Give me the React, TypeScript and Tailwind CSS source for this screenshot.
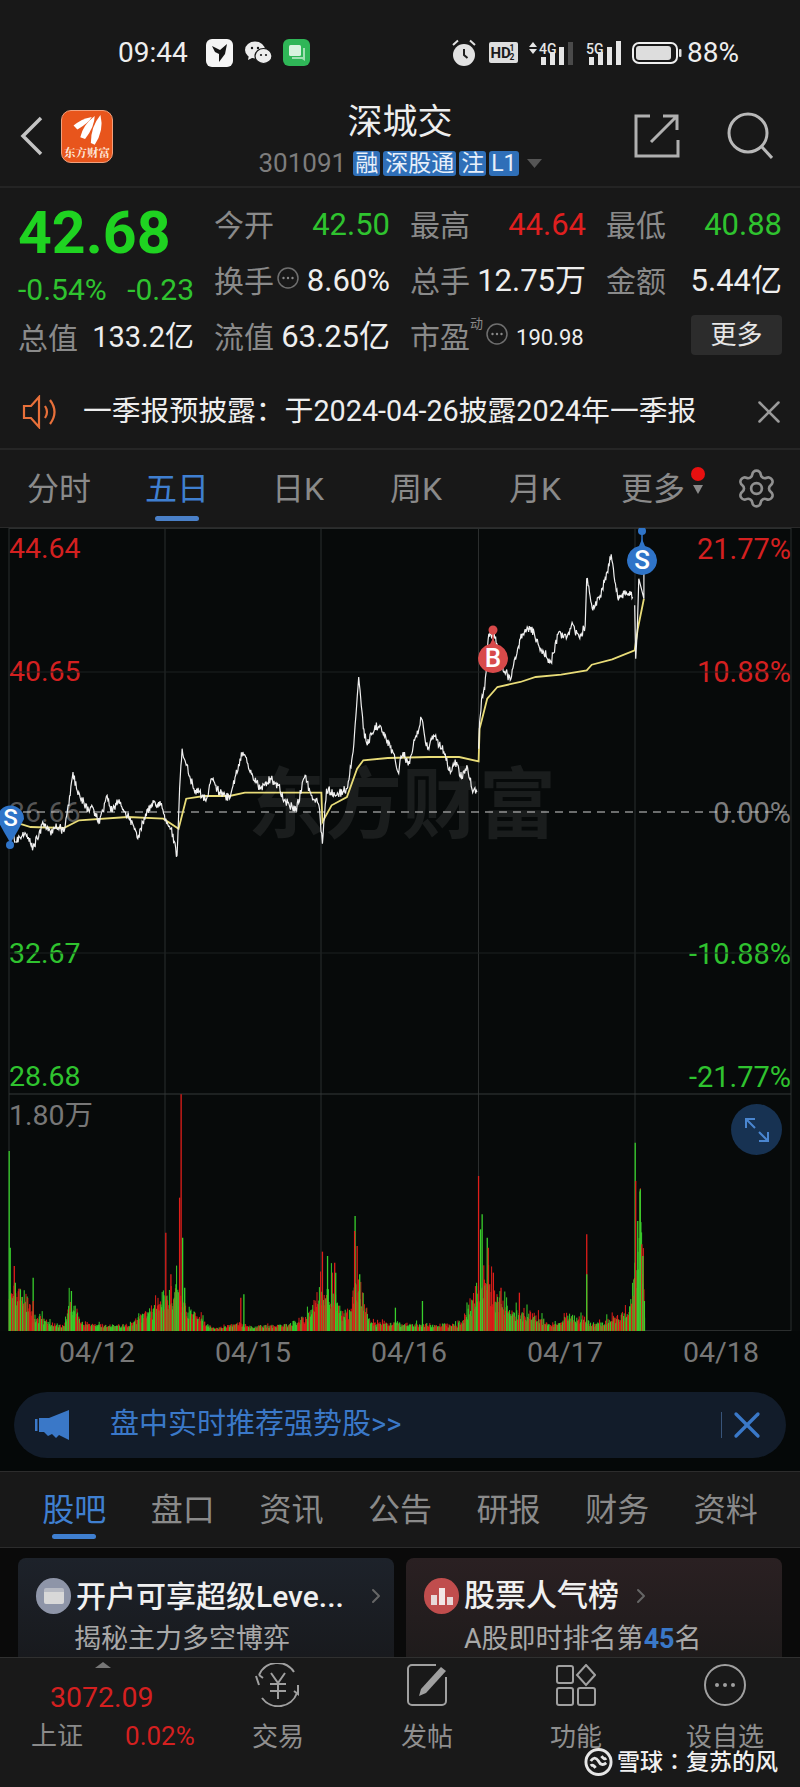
import React from 'react';
import { ChevronRight, Settings, X } from 'lucide-react';

const rand = (n: number) => {
  const s = Math.sin(n * 127.1 + 311.7) * 43758.5453;
  return s - Math.floor(s);
};

// anchors read off the chart: x in px, y in px, after scaling from the zoomed crop
const toReal = (p: number[][]) => p.map(([x, y]) => [x / 1.96, 521 + y / 3]);

const priceAnchors = toReal([
  [18, 900], [30, 960], [45, 930], [65, 975], [85, 905], [100, 940], [110, 905], [125, 930], [135, 850], [143, 750], [150, 800], [160, 830],
  [175, 870], [180, 850], [195, 905], [210, 820], [220, 870], [232, 840], [250, 880], [270, 950], [280, 900], [300, 835], [315, 850], [325, 890],
  [335, 920], [347, 1000], [352, 800], [357, 680], [365, 730], [380, 800], [405, 830], [415, 770], [430, 810], [450, 830], [462, 760], [476, 690],
  [490, 750], [510, 800], [530, 770], [545, 790], [560, 840], [580, 865], [598, 760], [610, 820], [625, 850],
  [632, 965], [640, 800], [660, 820], [680, 800], [692, 690], [703, 465], [712, 620], [720, 670], [735, 610], [750, 630], [770, 690], [780, 750],
  [790, 690], [800, 730], [810, 670], [826, 590], [838, 680], [850, 640], [870, 690], [880, 745], [895, 720], [905, 770], [915, 730], [925, 800], [935, 810],
]);

const priceAnchors2 = toReal([
  [938, 680], [940, 600], [945, 520], [950, 500], [958, 335], [970, 350], [985, 430], [1000, 475], [1020, 350], [1040, 315], [1060, 380], [1080, 420],
  [1095, 330], [1110, 350], [1120, 310], [1135, 345], [1147, 310], [1150, 170], [1162, 265], [1175, 230], [1190, 150], [1198, 97], [1212, 235], [1225, 205], [1240, 225],
]);

const priceAnchors3 = toReal([
  [1244, 250], [1246, 410], [1249, 330], [1252, 170], [1262, 230], [1262, 130],
]);

const avgAnchors = toReal([
  [18, 895], [60, 915], [125, 918], [155, 895], [250, 885], [320, 890], [350, 920], [365, 830], [400, 822], [450, 822], [480, 812], [630, 812],
  [632, 900], [650, 850], [680, 825], [700, 740], [712, 715], [760, 708], [840, 705], [900, 705], [938, 718], [940, 620], [955, 530], [975, 495],
  [1020, 480], [1050, 465], [1100, 458], [1150, 445], [1160, 428], [1200, 412], [1244, 385], [1250, 320], [1262, 230],
]);

const jagged = (anchors: number[][], amp: number) => {
  let d = `M${anchors[0][0].toFixed(1)} ${anchors[0][1].toFixed(1)}`;
  for (let i = 1; i < anchors.length; i++) {
    const [x0, y0] = anchors[i - 1];
    const [x1, y1] = anchors[i];
    const steps = Math.max(1, Math.round((x1 - x0) / 0.7));
    for (let s = 1; s <= steps; s++) {
      const t = s / steps;
      const noise = s === steps ? 0 : (rand(i * 100 + s) - 0.5) * amp;
      d += `L${(x0 + (x1 - x0) * t).toFixed(1)} ${(y0 + (y1 - y0) * t + noise).toFixed(1)}`;
    }
  }
  return d;
};

const line = (anchors: number[][]) => anchors.map(([x, y], i) => `${i ? 'L' : 'M'}${x.toFixed(1)} ${y.toFixed(1)}`).join('');

// volume envelope, [x in crop px, height in crop px]
const envelope = [
  [18, 130], [50, 110], [65, 50], [100, 25], [125, 15], [135, 90], [145, 90], [160, 20], [250, 20], [270, 40], [300, 70], [320, 120], [345, 130], [365, 80],
  [400, 30], [420, 8], [470, 25], [490, 15], [560, 20], [600, 45], [625, 120], [650, 130], [670, 60], [685, 60], [700, 170], [715, 80], [730, 25], [900, 20],
  [925, 90], [945, 190], [970, 110], [1000, 60], [1050, 50], [1080, 15], [1120, 50], [1170, 20], [1230, 60], [1240, 110], [1255, 400], [1262, 220], [1264, 0],
];

const envAt = (x: number) => {
  for (let i = 1; i < envelope.length; i++) {
    if (x <= envelope[i][0]) {
      const [x0, h0] = envelope[i - 1];
      const [x1, h1] = envelope[i];
      return h0 + ((h1 - h0) * (x - x0)) / (x1 - x0);
    }
  }
  return 0;
};

const RED = '#e01e1a';
const GREEN = '#38d02c';

const volumeBars: { x: number; h: number; c: string }[] = [];
for (let i = 0; i < 1060; i++) {
  const x = 9.2 + i * 0.6;
  const z = x * 1.96;
  const r = rand(i + 5000);
  const spike = rand(i + 7000) > 0.9 ? 1.6 : 1.1;
  volumeBars.push({ x, h: (envAt(z) * (0.45 + 0.55 * r) * spike) / 3, c: rand(i + 9000) > 0.5 ? RED : GREEN });
}

const spikes: [number, number, string][] = [
  [18, 210, GREEN], [20, 500, GREEN], [28, 555, RED], [30, 605, GREEN], [40, 625, GREEN], [65, 590, GREEN], [65, 660, RED], [140, 630, GREEN], [325, 455, RED], [335, 580, RED],
  [345, 610, GREEN], [352, 350, RED], [355, 40, RED], [358, 470, GREEN], [362, 620, GREEN], [472, 650, RED], [478, 640, GREEN], [632, 512, RED], [642, 525, GREEN], [656, 545, RED],
  [658, 575, GREEN], [696, 405, GREEN], [695, 450, RED], [700, 495, RED], [705, 580, GREEN], [775, 680, GREEN], [828, 660, GREEN], [938, 285, RED], [945, 400, GREEN], [942, 445, GREEN],
  [955, 470, GREEN], [957, 500, RED], [967, 575, RED], [982, 620, RED], [1018, 635, RED], [1150, 460, RED], [1150, 580, GREEN], [1245, 185, GREEN], [1246, 300, RED], [1255, 325, GREEN],
  [1250, 420, GREEN], [1258, 490, RED], [1260, 525, GREEN], [1263, 660, GREEN],
];

const gridX = [165, 321, 478.5, 635];
const gridY = [671, 952];

// the svg's own coordinates are page pixels, one lower than the crop readings
const ChartDrawing = () => (
  <svg viewBox="0 527 800 803" className="relative block w-[800px] h-[803px]" fill="none">
    <rect x="9" y="527.5" width="782" height="802" stroke="#2b2e2e" />
    {gridX.map((x) => <line key={x} x1={x} x2={x} y1={527} y2={1330} stroke="#2b2e2e" />)}
    {gridY.map((y) => <line key={y} x1={9} x2={791} y1={y} y2={y} stroke="#1d2020" />)}
    <line x1={9} x2={791} y1={1093} y2={1093} stroke="#353838" />
    <line x1={9} x2={791} y1={811} y2={811} stroke="#d0d0d0" strokeDasharray="8 6" />
    {volumeBars.map((b, i) => <line key={i} x1={b.x} x2={b.x} y1={1330} y2={1330 - b.h} stroke={b.c} strokeWidth={1} />)}
    {spikes.map(([x, y, c], i) => <line key={i} x1={x / 1.96} x2={x / 1.96} y1={1330} y2={1080 + y / 3} stroke={c} strokeWidth={1.3} />)}
    <path d={line(avgAnchors)} stroke="#e8dc78" strokeWidth={1.8} />
    <path d={jagged(priceAnchors, 9)} stroke="#f0f0f0" strokeWidth={1.2} />
    <path d={jagged(priceAnchors2, 9)} stroke="#f0f0f0" strokeWidth={1.2} />
    <path d={line(priceAnchors3)} stroke="#f0f0f0" strokeWidth={1.2} />

    <path d="M-3 818 A13.5 13.5 0 1 1 24 818 Q18 830 10.5 842 Q3 830 -3 818Z" fill="#2f74c8" />
    <circle cx="10" cy="844" r="4" fill="#2f74c8" />
    <text x="10.5" y="825" textAnchor="middle" fontSize="24" fontFamily="Roboto" fontWeight="500" fill="#fff">S</text>

    <line x1="642" x2="642" y1="530" y2="550" stroke="#2f74c8" strokeWidth="1.5" />
    <circle cx="642" cy="530" r="4" fill="#2f74c8" />
    <path d="M627 559 A15 15 0 0 0 657 559 A15 15 0 0 0 645 545 L642 538 L639 545 A15 15 0 0 0 627 559Z" fill="#2f74c8" />
    <text x="642" y="568" textAnchor="middle" fontSize="26" fontFamily="Roboto" fontWeight="500" fill="#fff">S</text>

    <line x1="493" x2="493" y1="629" y2="645" stroke="#d84a4a" strokeWidth="1.5" />
    <circle cx="493" cy="629" r="4.5" fill="#d84a4a" />
    <path d="M478 657 A15 15 0 0 0 508 657 A15 15 0 0 0 496 643 L493 637 L490 643 A15 15 0 0 0 478 657Z" fill="#d84a4a" />
    <text x="493" y="666" textAnchor="middle" fontSize="26" fontFamily="Roboto" fontWeight="500" fill="#fff">B</text>
  </svg>
);

const StatusBar = () => (
  <div className="flex items-center h-[92px] pt-[13px] pl-[118px] text-[#eeeeee]">
    <span className="text-[28px] leading-none w-[71px]">09:44</span>
    <svg viewBox="0 0 27 28" className="w-[27px] h-[28px] ml-[17px]">
      <rect width="27" height="28" rx="6" fill="#f5f5f5" />
      <path d="M6 7 L14 11 L21 5 L19 15 L13 23 L13 15 L9 13Z" fill="#151515" />
    </svg>
    <svg viewBox="0 0 27 26" className="w-[27px] h-[26px] ml-[12px]">
      <ellipse cx="10" cy="10" rx="10" ry="8.5" fill="#ededed" />
      <path d="M4 15 L3 20 L9 17Z" fill="#ededed" />
      <ellipse cx="18.5" cy="16" rx="8.5" ry="7.5" fill="#ededed" stroke="#181818" strokeWidth="1.2" />
      <circle cx="7" cy="8" r="1.2" fill="#181818" />
      <circle cx="13" cy="8" r="1.2" fill="#181818" />
      <circle cx="16" cy="15" r="1.1" fill="#181818" />
      <circle cx="21" cy="15" r="1.1" fill="#181818" />
    </svg>
    <svg viewBox="0 0 27 27" className="w-[27px] h-[27px] ml-[11px]">
      <rect width="27" height="27" rx="6" fill="#2fb657" />
      <rect x="6" y="6" width="12" height="11" rx="1.5" fill="#d8f3df" />
      <path d="M9 18 H20 V9 H22 V22 L19 20 H9Z" fill="#9fe0b2" />
    </svg>
    <svg viewBox="0 0 24 28" className="w-[24px] h-[28px] ml-[142px]">
      <circle cx="12" cy="16" r="11" fill="#e2e2e2" />
      <path d="M12 10 V16 L15.5 19" stroke="#202020" strokeWidth="2" fill="none" />
      <path d="M1 6 L6 1.5 M23 6 L18 1.5" stroke="#e2e2e2" strokeWidth="2" />
    </svg>
    <svg viewBox="0 0 29 21" className="w-[29px] h-[21px] ml-[13px]">
      <rect width="29" height="21" rx="2" fill="#dedede" />
      <text x="1.5" y="16" fontSize="15" fontWeight="700" fontFamily="Roboto" fill="#1a1a1a">HD</text>
      <text x="23" y="9" fontSize="8.5" fontWeight="700" textAnchor="middle" fontFamily="Roboto" fill="#1a1a1a">1</text>
      <text x="23" y="18" fontSize="8.5" fontWeight="700" textAnchor="middle" fontFamily="Roboto" fill="#1a1a1a">2</text>
    </svg>
    <svg viewBox="0 0 46 24" className="w-[46px] h-[24px] ml-[11px]">
      <path d="M4 1 L8 6 H0Z M4 13 L8 8 H0Z" fill="#e6e6e6" />
      <text x="10" y="13" fontSize="14" fontWeight="500" fontFamily="Roboto" fill="#e6e6e6">4G</text>
      <rect x="12" y="16" width="5" height="8" fill="#e6e6e6" />
      <rect x="21" y="11" width="5" height="13" fill="#e6e6e6" />
      <rect x="30" y="6" width="5" height="18" fill="#e6e6e6" />
      <rect x="39" y="1" width="5" height="23" fill="#4a4a4a" />
    </svg>
    <svg viewBox="0 0 36 24" className="w-[36px] h-[24px] ml-[11px]">
      <text x="0" y="13" fontSize="14" fontWeight="500" fontFamily="Roboto" fill="#e6e6e6">5G</text>
      <rect x="3" y="16" width="5" height="8" fill="#e6e6e6" />
      <rect x="12" y="11" width="5" height="13" fill="#e6e6e6" />
      <rect x="21" y="6" width="5" height="18" fill="#e6e6e6" />
      <rect x="30" y="0" width="5" height="24" fill="#e6e6e6" />
    </svg>
    <svg viewBox="0 0 50 22" className="w-[50px] h-[22px] ml-[10px]">
      <rect x="1" y="1" width="44" height="20" rx="6" stroke="#eeeeee" strokeWidth="2" fill="none" />
      <rect x="4" y="4" width="35" height="14" rx="3" fill="#dddddd" />
      <rect x="47" y="7" width="2.5" height="8" rx="1" fill="#dddddd" />
    </svg>
    <span className="text-[28px] leading-none ml-[5px]">88%</span>
  </div>
);

const Badge = ({ children }: { children: React.ReactNode }) => (
  <span className="h-[25px] px-[2px] rounded-[3px] bg-[#2f6fb8] text-[#e8f0fa] text-[23px] leading-[25px] flex items-center">{children}</span>
);

const Header = () => (
  <div className="relative flex items-center h-[96px] pb-[6px] pl-[20px] pr-[27px] border-b-2 border-[#242424]">
    <svg viewBox="0 0 24 40" className="w-[24px] h-[40px]" fill="none">
      <path d="M21 2 L3 20 L21 38" stroke="#c4c4c4" strokeWidth="3.5" />
    </svg>
    <div className="ml-[17px] w-[52px] h-[53px] rounded-[10px] bg-[#e8551c] border border-[#f2a07c] flex flex-col items-center overflow-hidden">
      <svg viewBox="0 0 52 36" className="w-[50px] h-[35px]">
        <path d="M12 15 Q20 8 31 6 Q28 12 16 19Z" fill="#fff" />
        <path d="M19 27 Q22 14 34 5 Q34 16 24 29Z" fill="#fff" />
        <path d="M30 33 Q30 16 40 4 Q44 20 34 35Z" fill="#fff" />
      </svg>
      <span className="font-['Noto_Serif_CJK_SC','Noto_Sans_CJK_SC',serif] font-bold text-[11.5px] leading-none mt-[1px] text-[#fde8dc] whitespace-nowrap">东方财富</span>
    </div>
    <div className="absolute left-0 right-0 top-[10px] flex flex-col items-center">
      <span className="text-[35px] leading-[42px] text-[#eeeeee]">深城交</span>
      <div className="flex items-center mt-[6px] gap-[3px]">
        <span className="text-[26px] leading-[26px] text-[#7d7d7d] mr-[4px]">301091</span>
        <Badge>融</Badge>
        <Badge>深股通</Badge>
        <Badge>注</Badge>
        <Badge>L1</Badge>
        <svg viewBox="0 0 15 9" className="w-[15px] h-[9px] ml-[5px]"><path d="M0 0 H15 L7.5 9Z" fill="#555555" /></svg>
      </div>
    </div>
    <div className="ml-auto flex items-center gap-[47px]">
      <svg viewBox="0 0 46 44" className="w-[46px] h-[44px]" fill="none" stroke="#b0b0b0" strokeWidth="3">
        <path d="M16 2 H2 V42 H44 V26" />
        <path d="M17 28 L42 3 M29 2 H43 V16" />
      </svg>
      <svg viewBox="0 0 46 48" className="w-[46px] h-[48px]" fill="none" stroke="#b8b8b8" strokeWidth="3">
        <circle cx="21" cy="21" r="19" />
        <path d="M35 35 L45 46" />
      </svg>
    </div>
  </div>
);

const Row = ({ label, value, color = 'text-[#eeeeee]', info, small }: { label: string; value: string; color?: string; info?: boolean; small?: boolean }) => (
  <div className="flex items-center justify-between h-[56px]">
    <span className="flex items-center text-[30px] text-[#8a8a8a]">
      {label}
      {info && <InfoDot />}
    </span>
    <span className={`${small ? 'text-[29px]' : 'text-[31px]'} ${color}`}>{value}</span>
  </div>
);

const InfoDot = () => (
  <svg viewBox="0 0 22 22" className="w-[22px] h-[22px] ml-[3px] mb-[6px]" fill="none">
    <circle cx="11" cy="11" r="10" stroke="#6f6f6f" strokeWidth="1.5" />
    <circle cx="6.5" cy="11" r="1.2" fill="#8a8a8a" />
    <circle cx="11" cy="11" r="1.2" fill="#8a8a8a" />
    <circle cx="15.5" cy="11" r="1.2" fill="#8a8a8a" />
  </svg>
);

const Quote = () => (
  <div className="flex h-[186px] pl-[18px] pt-[9px]">
    <div className="w-[176px] flex flex-col">
      <span className="text-[59px] font-bold leading-[64px] mt-[4px] text-[#1fd321]">42.68</span>
      <div className="flex justify-between text-[30px] leading-[40px] mt-[5px] text-[#2fc32f]">
        <span>-0.54%</span>
        <span>-0.23</span>
      </div>
      <div className="flex items-center justify-between h-[56px]">
        <span className="text-[30px] text-[#8a8a8a]">总值</span>
        <span className="text-[29px] text-[#eeeeee]">133.2亿</span>
      </div>
    </div>
    <div className="ml-[20px] grid grid-cols-[176px_176px_176px] gap-x-[20px] content-start">
      <Row label="今开" value="42.50" color="text-[#2fc32f]" />
      <Row label="最高" value="44.64" color="text-[#df1f1f]" />
      <Row label="最低" value="40.88" color="text-[#2fc32f]" />
      <Row label="换手" value="8.60%" info />
      <Row label="总手" value="12.75万" />
      <Row label="金额" value="5.44亿" />
      <Row label="流值" value="63.25亿" />
      <div className="flex items-center h-[56px] text-[#8a8a8a]">
        <span className="text-[30px]">市盈</span>
        <span className="text-[13px] self-start mt-[5px]">动</span>
        <InfoDot />
        <span className="text-[22px] text-[#eeeeee] ml-[8px]">190.98</span>
      </div>
      <div className="flex justify-end items-center h-[56px] pb-[4px]">
        <span className="w-[91px] h-[40px] rounded-[4px] bg-[#2c2c2c] text-[#e6e6e6] text-[26px] leading-[40px] text-center">更多</span>
      </div>
    </div>
  </div>
);

const Notice = () => (
  <div className="flex items-center h-[76px] pt-[2px] pl-[22px] pr-[12px] border-b-2 border-[#262626]">
    <svg viewBox="0 0 38 34" className="w-[38px] h-[34px]" fill="none" stroke="#e8703a" strokeWidth="2.2">
      <path d="M2 11 H9 L17 2 V32 L9 23 H2Z" />
      <path d="M23 11 Q27 17 23 23" />
      <path d="M28 5 Q37 17 28 29" />
    </svg>
    <span className="ml-[23px] text-[28.8px] text-[#eeeeee] whitespace-nowrap">一季报预披露：于2024-04-26披露2024年一季报</span>
    <X className="ml-auto text-[#9a9a9a]" size={38} strokeWidth={1.6} />
  </div>
);

const chartTabs = ['分时', '五日', '日K', '周K', '月K'];

const ChartTabs = () => (
  <div className="flex items-center h-[77px]">
    <div className="grid grid-cols-[118px_118px_124px_112px_126px_110px] h-full items-center text-center text-[32px] text-[#8a8a8a]">
      {chartTabs.map((t, i) => (
        <span key={t} className={`relative ${i === 1 ? 'text-[#3f7fd0]' : ''}`}>
          {t}
          {i === 1 && <span className="absolute left-[37px] top-[51px] w-[44px] h-[5px] rounded-full bg-[#4a80c8]" />}
        </span>
      ))}
      <span className="relative">
        更多
        <span className="absolute left-[93px] top-[2px] w-[14px] h-[14px] rounded-full bg-[#e81010]" />
        <svg viewBox="0 0 10 9" className="absolute left-[95px] top-[20px] w-[10px] h-[9px]"><path d="M0 0 H10 L5 9Z" fill="#8a8a8a" /></svg>
      </span>
    </div>
    <Settings className="ml-[27px] text-[#909090]" size={43} strokeWidth={1.5} />
  </div>
);

const leftLabels = [
  { top: 'top-[6px]', text: '44.64', color: 'text-[#d42020]' },
  { top: 'top-[129px]', text: '40.65', color: 'text-[#d42020]' },
  { top: 'top-[270px]', text: '36.66', color: 'text-[#555555]' },
  { top: 'top-[411px]', text: '32.67', color: 'text-[#2fc32f]' },
  { top: 'top-[534px]', text: '28.68', color: 'text-[#2fc32f]' },
];

const rightLabels = [
  { top: 'top-[6px]', text: '21.77%', color: 'text-[#d42020]' },
  { top: 'top-[129px]', text: '10.88%', color: 'text-[#d42020]' },
  { top: 'top-[270px]', text: '0.00%', color: 'text-[#7d7d7d]' },
  { top: 'top-[411px]', text: '-10.88%', color: 'text-[#2fc32f]' },
  { top: 'top-[534px]', text: '-21.77%', color: 'text-[#2fc32f]' },
];

const Chart = () => (
  <div className="relative bg-[#070a0a] w-[800px] h-[803px]">
    <span className="absolute left-[248px] top-[233px] text-[77px] font-bold leading-[90px] text-[#1a1d1d] whitespace-nowrap">东方财富</span>
    {leftLabels.map((l) => (
      <span key={l.text} className={`absolute left-[9px] ${l.top} text-[28.5px] leading-[30px] ${l.color}`}>{l.text}</span>
    ))}
    {rightLabels.map((l) => (
      <span key={l.text} className={`absolute right-[9px] ${l.top} text-[29px] leading-[30px] ${l.color}`}>{l.text}</span>
    ))}
    <span className="absolute left-[9px] top-[573px] text-[28.5px] leading-[30px] text-[#777777]">1.80万</span>
    <ChartDrawing />
    <div className="absolute left-[731px] top-[576px] w-[51px] h-[51px] rounded-full bg-[#173252] flex items-center justify-center">
      <svg viewBox="0 0 28 28" className="w-[28px] h-[28px]" fill="none" stroke="#4a86d0" strokeWidth="2">
        <path d="M3 12 V3 H12 M3 3 L12 12" />
        <path d="M25 16 V25 H16 M25 25 L16 16" />
      </svg>
    </div>
  </div>
);

const dates = ['04/12', '04/15', '04/16', '04/17', '04/18'];

const Dates = () => (
  <div className="grid grid-cols-[repeat(5,156px)] pl-[19px] h-[44px] items-center text-center text-[28.5px] text-[#777777]">
    {dates.map((d) => <span key={d}>{d}</span>)}
  </div>
);

const Banner = () => (
  <div className="pt-[17px] pb-[13px] px-[14px]">
    <div className="flex items-center h-[66px] rounded-full bg-[#121c2a] pl-[21px] pr-[17px]">
      <svg viewBox="0 0 35 30" className="w-[35px] h-[30px]">
        <rect x="0" y="9" width="2.5" height="12" fill="#3a78c8" />
        <path d="M4 8 H14 L34 0 V30 L24 25 L21 28 L17 24 L13 26 L9 22 H4Z" fill="#3a78c8" />
      </svg>
      <span className="ml-[40px] text-[29px] text-[#3a78c8] whitespace-nowrap">盘中实时推荐强势股&gt;&gt;</span>
      <span className="ml-auto w-[1px] h-[26px] bg-[#38547a]" />
      <X className="ml-[3px] text-[#3a78c8]" size={44} strokeWidth={1.8} />
    </div>
  </div>
);

const contentTabs = ['股吧', '盘口', '资讯', '公告', '研报', '财务', '资料'];

const ContentTabs = () => (
  <div className="grid grid-cols-7 h-[77px] px-[20px] items-center text-center text-[32px] text-[#8a8a8a] bg-[#181818] border-t border-b border-[#2c2c2c]">
    {contentTabs.map((t, i) => (
      <span key={t} className={`relative ${i === 0 ? 'text-[#3f7fd0]' : ''}`}>
        {t}
        {i === 0 && <span className="absolute left-[32px] top-[48px] w-[44px] h-[5px] rounded-full bg-[#3f7fd0]" />}
      </span>
    ))}
  </div>
);

const Cards = () => (
  <div className="flex gap-[12px] h-[109px] pt-[10px] px-[18px] bg-[#0a0a0a] overflow-hidden">
    <div className="w-[376px] h-[120px] shrink-0 rounded-t-[8px] bg-gradient-to-b from-[#1d222a] to-[#17181b] pl-[18px] pt-[18px]">
      <div className="flex items-center h-[40px]">
        <div className="w-[35px] h-[36px] rounded-full bg-[#8e95a8] flex items-center justify-center">
          <span className="w-[20px] h-[16px] rounded-[2px] bg-[#d8d8d8] border-t-[4px] border-[#b8bbc4]" />
        </div>
        <span className="ml-[5px] text-[30px] font-medium text-[#f0f0f0] whitespace-nowrap">开户可享超级Leve...</span>
        <ChevronRight className="ml-[20px] text-[#666666]" size={24} strokeWidth={2} />
      </div>
      <div className="ml-[38px] mt-[5px] text-[27px] leading-[36px] text-[#a8a8a8] whitespace-nowrap">揭秘主力多空博弈</div>
    </div>
    <div className="w-[376px] h-[120px] shrink-0 rounded-t-[8px] bg-gradient-to-b from-[#2a2022] to-[#1c1a1a] pl-[18px] pt-[18px]">
      <div className="flex items-center h-[40px]">
        <div className="w-[35px] h-[36px] rounded-full bg-[#c04d4d] flex items-center justify-center">
          <svg viewBox="0 0 22 18" className="w-[22px] h-[18px]">
            <rect x="0" y="8" width="6" height="10" fill="#e8d8d8" />
            <rect x="8" y="1" width="6" height="17" fill="#f2e6e6" />
            <rect x="16" y="10" width="6" height="8" fill="#e8d8d8" />
          </svg>
        </div>
        <span className="ml-[5px] text-[31px] font-medium text-[#f0f0f0] whitespace-nowrap">股票人气榜</span>
        <ChevronRight className="ml-[10px] text-[#666666]" size={24} strokeWidth={2} />
      </div>
      <div className="ml-[40px] mt-[5px] text-[27px] leading-[36px] text-[#a8a8a8] whitespace-nowrap">
        A股即时排名第<span className="font-bold text-[#3a78c8]">45</span>名
      </div>
    </div>
  </div>
);

const navItems = [
  {
    label: '交易',
    center: 'w-[148px]',
    icon: (
      <svg viewBox="0 0 48 44" className="w-[48px] h-[44px]" fill="none" stroke="#a0a0a0" strokeWidth="2">
        <path d="M5 12 A20 20 0 0 1 40 9" />
        <path d="M2 13 L5 22 M5 12 L9 15" />
        <path d="M43 30 A20 20 0 0 1 8 35" />
        <path d="M44 22 L44 31 L40 28" />
        <path d="M17 10 L24 20 L31 10 M16 21 H32 M16 28 H32 M24 20 V36" />
      </svg>
    ),
  },
  {
    label: '发帖',
    center: 'w-[150px]',
    icon: (
      <svg viewBox="0 0 42 44" className="w-[42px] h-[44px]" fill="none" stroke="#a0a0a0" strokeWidth="2">
        <path d="M30 2 H6 A4 4 0 0 0 2 6 V38 A4 4 0 0 0 6 42 H36 A4 4 0 0 0 40 38 V14" />
        <path d="M15 26 L35 4 L40 8 L20 30 L13 33Z" fill="#a0a0a0" stroke="none" />
      </svg>
    ),
  },
  {
    label: '功能',
    center: 'w-[148px]',
    icon: (
      <svg viewBox="0 0 40 42" className="w-[40px] h-[42px]" fill="none" stroke="#a0a0a0" strokeWidth="2">
        <rect x="1" y="2" width="16" height="17" rx="2" />
        <path d="M30 1 L39 11 L30 21 L21 11Z" />
        <rect x="1" y="24" width="16" height="17" rx="2" />
        <rect x="22" y="24" width="17" height="17" rx="2" />
      </svg>
    ),
  },
  {
    label: '设自选',
    center: 'w-[150px]',
    icon: (
      <svg viewBox="0 0 42 42" className="w-[42px] h-[42px]" fill="none">
        <circle cx="21" cy="21" r="20" stroke="#a0a0a0" strokeWidth="2" />
        <circle cx="13" cy="21" r="2" fill="#a0a0a0" />
        <circle cx="21" cy="21" r="2" fill="#a0a0a0" />
        <circle cx="29" cy="21" r="2" fill="#a0a0a0" />
      </svg>
    ),
  },
];

const BottomNav = () => (
  <div className="relative flex h-[130px] bg-[#191919] border-t border-[#303030]">
    <div className="w-[204px] pl-[31px] pt-[4px] shrink-0">
      <svg viewBox="0 0 16 6" className="ml-[64px] w-[16px] h-[6px]"><path d="M8 0 L16 6 H0Z" fill="#777777" /></svg>
      <div className="ml-[19px] mt-[13px] text-[28.5px] leading-[34px] text-[#d42020]">3072.09</div>
      <div className="flex items-center mt-[2px] h-[38px]">
        <span className="text-[26px] text-[#8a8a8a]">上证</span>
        <span className="ml-[42px] text-[26px] text-[#d42020]">0.02%</span>
      </div>
    </div>
    {navItems.map((n) => (
      <div key={n.label} className={`${n.center} flex flex-col items-center pt-[5px] shrink-0`}>
        <div className="h-[44px] flex items-center">{n.icon}</div>
        <span className="mt-[13px] text-[26px] leading-[34px] text-[#8f8f8f]">{n.label}</span>
      </div>
    ))}
    <div className="absolute left-[584px] top-[87px] flex items-center">
      <svg viewBox="0 0 30 30" className="w-[29px] h-[30px]" fill="none" stroke="#e6e6e6" strokeWidth="3">
        <circle cx="15" cy="15" r="13" />
        <path d="M7 14 Q11 8 15 14 Q18 20 23 16" />
        <path d="M12 21 Q9 17 7 19 M18 9 Q21 13 23 11" />
      </svg>
      <span className="ml-[4px] text-[23px] leading-[30px] font-medium text-[#f0f0f0] whitespace-nowrap">雪球<span className="font-['Noto_Sans_CJK_TC',sans-serif]">：</span>复苏的风</span>
    </div>
  </div>
);

export default function App() {
  return (
    <div className="w-[800px] h-[1787px] overflow-hidden bg-[#181818] font-['Roboto','Noto_Sans_CJK_SC',sans-serif]">
      <StatusBar />
      <Header />
      <Quote />
      <Notice />
      <ChartTabs />
      <div className="border-t border-[#2a2a2a]" />
      <div className="bg-[#050808]">
        <Chart />
        <Dates />
        <Banner />
      </div>
      <ContentTabs />
      <Cards />
      <BottomNav />
    </div>
  );
}
